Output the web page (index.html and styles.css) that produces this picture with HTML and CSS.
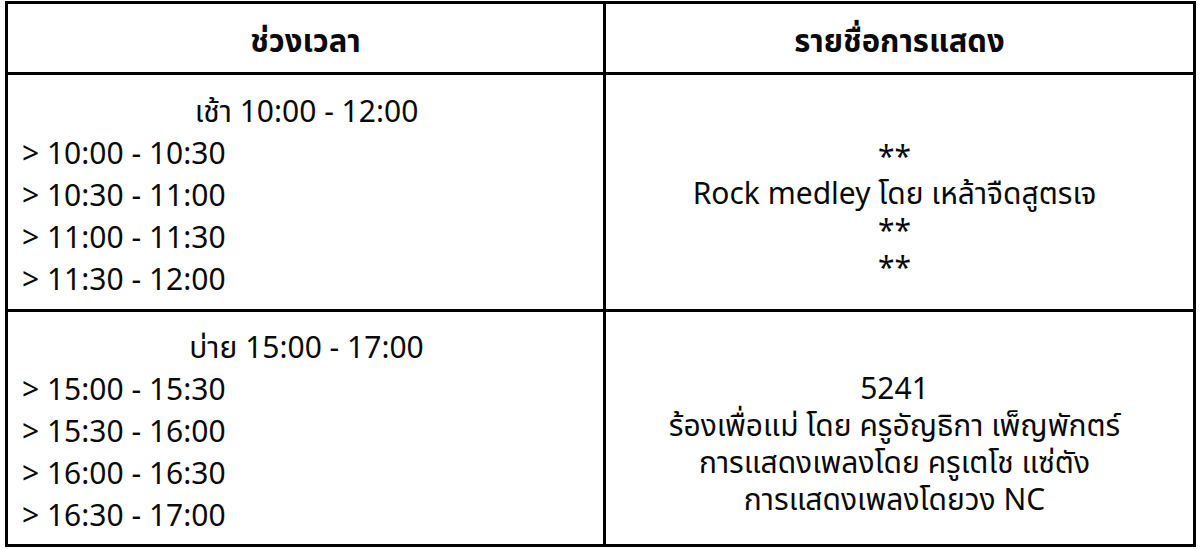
FILE: index.html
```html
<!DOCTYPE html>
<html lang="th">
<head>
<meta charset="utf-8">
<link rel="stylesheet" href="styles.css">
</head>
<body>
<table class="schedule">
  <thead>
    <tr>
      <th class="col-time">ช่วงเวลา</th>
      <th class="col-show">รายชื่อการแสดง</th>
    </tr>
  </thead>
  <tbody>
    <tr class="row-morning">
      <td class="time-cell">
        <div class="period">เช้า 10:00 - 12:00</div>
        <div class="slot">&gt; 10:00 - 10:30</div>
        <div class="slot">&gt; 10:30 - 11:00</div>
        <div class="slot">&gt; 11:00 - 11:30</div>
        <div class="slot">&gt; 11:30 - 12:00</div>
      </td>
      <td class="show-cell">
        <div class="show">&nbsp;</div>
        <div class="show">**</div>
        <div class="show">Rock medley โดย เหล้าจืดสูตรเจ</div>
        <div class="show">**</div>
        <div class="show">**</div>
      </td>
    </tr>
    <tr class="row-afternoon">
      <td class="time-cell">
        <div class="period">บ่าย 15:00 - 17:00</div>
        <div class="slot">&gt; 15:00 - 15:30</div>
        <div class="slot">&gt; 15:30 - 16:00</div>
        <div class="slot">&gt; 16:00 - 16:30</div>
        <div class="slot">&gt; 16:30 - 17:00</div>
      </td>
      <td class="show-cell show-cell-afternoon">
        <div class="show">&nbsp;</div>
        <div class="show">5241</div>
        <div class="show">ร้องเพื่อแม่ โดย ครูอัญธิกา เพ็ญพักตร์</div>
        <div class="show">การแสดงเพลงโดย ครูเตโช แซ่ตัง</div>
        <div class="show">การแสดงเพลงโดยวง NC</div>
      </td>
    </tr>
  </tbody>
</table>
</body>
</html>
```

FILE: styles.css
```css
html, body {
  margin: 0;
  padding: 0;
  background: #fff;
}
body {
  padding: 1px 4px 0 5px;
  font-family: "Noto Sans", "Noto Sans Thai", "Open Sans", sans-serif;
  color: #0a0a0a;
}
.schedule {
  border-collapse: collapse;
  width: 1191px;
  border: 3px solid #000;
  table-layout: fixed;
}
.schedule th,
.schedule td {
  border: 3px solid #000;
  padding: 0;
}
.schedule thead tr {
  height: 71px;
}
.schedule th {
  font-size: 31px;
  font-weight: 700;
  text-align: center;
  vertical-align: middle;
  padding-top: 9px;
}
.col-time { width: 595px; }
.row-morning { height: 237px; }
.row-afternoon { height: 235px; }
.time-cell {
  vertical-align: middle;
  font-size: 30px;
  line-height: 42px;
  padding: 6px 0 0 14px !important;
}
.period {
  text-align: center;
  padding-right: 12px;
}
.slot {
  text-align: left;
}
.show-cell {
  vertical-align: middle;
  text-align: center;
  font-size: 30px;
  line-height: 37px;
  padding: 0 10px 0 0 !important;
}
.show-cell-afternoon {
  padding-bottom: 8px !important;
}
```
